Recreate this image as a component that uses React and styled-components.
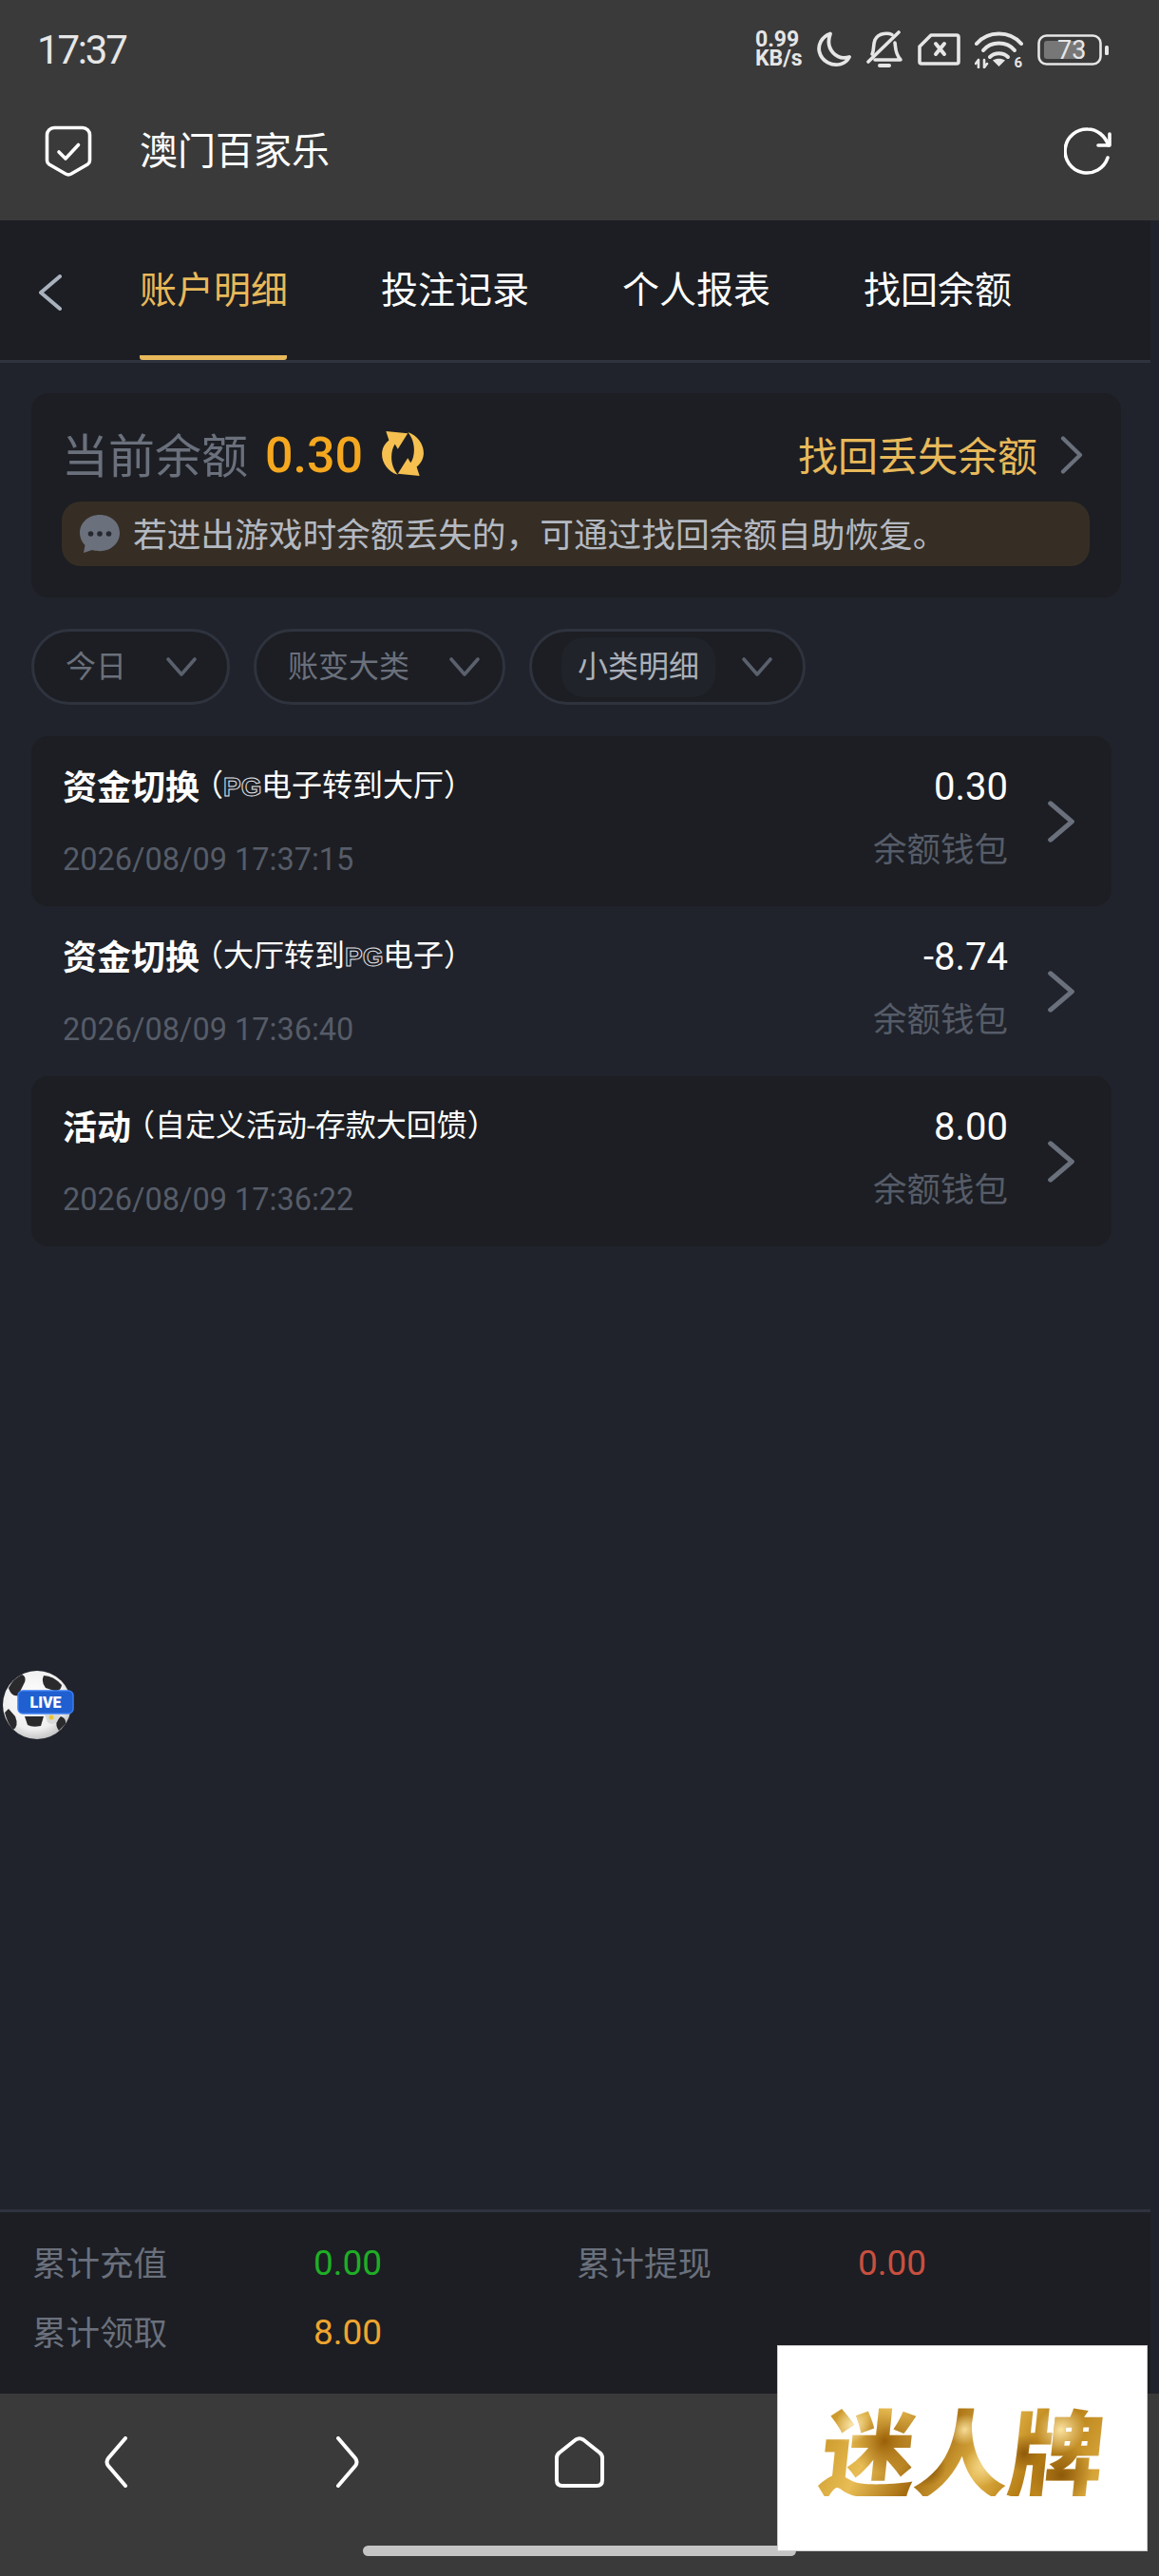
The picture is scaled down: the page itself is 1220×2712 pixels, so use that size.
import styled, { createGlobalStyle } from "styled-components";

const FONT = `Roboto, "Noto Sans CJK SC", sans-serif`;

const GlobalStyle = createGlobalStyle`
	html, body {
		margin: 0;
		padding: 0;
		background: #20232b;
	}
	body {
		font-family: ${FONT};
	}
`;

const Page = styled.div`
	width: 1220px;
	height: 2712px;
	position: relative;
	display: flex;
	flex-direction: column;
	overflow: hidden;
	background: #20232b;
`;

const TopArea = styled.div`
	background: #3a3a3a;
	color: #fff;
`;

const StatusBar = styled.div`
	height: 104px;
	padding: 0 52px 0 39px;
	display: flex;
	align-items: center;
	justify-content: space-between;
	color: #e6e6e6;
`;

const Clock = styled.span`
	font-size: 42px;
	font-weight: 400;
	letter-spacing: -2.2px;
`;

const StatusIcons = styled.div`
	display: flex;
	align-items: center;
	gap: 15px;
`;

const Speed = styled.div`
	width: 52px;
	margin-right: -2px;
	font-size: 23px;
	line-height: 20px;
	font-weight: 700;
	white-space: nowrap;
	span {
		display: block;
	}
`;

const HeaderRow = styled.div`
	height: 110px;
	padding: 0 48px 18px 47px;
	display: flex;
	align-items: center;
	gap: 50px;
`;

const HeaderTitle = styled.div`
	flex: 1;
	margin-top: 2px;
	font-size: 40px;
	line-height: 48px;
`;

const Content = styled.div`
	width: 1211px;
	flex: 1;
	display: flex;
	flex-direction: column;
`;

const TabBar = styled.div`
	height: 147px;
	display: flex;
	background: #1c1e23;
	border-bottom: 3px solid #2e333e;
`;

const BackSlot = styled.div`
	width: 147px;
	padding: 4px 0 0 41px;
	box-sizing: border-box;
	display: flex;
	align-items: center;
`;

const Tabs = styled.div`
	display: flex;
	gap: 99px;
`;

const Tab = styled.div`
	width: 155px;
	height: 147px;
	box-sizing: border-box;
	padding-bottom: 3px;
	display: flex;
	align-items: center;
	white-space: nowrap;
	font-size: 39px;
	color: ${({ $active }) => ($active ? "#e8b95a" : "#fff")};
	border-bottom: 5px solid ${({ $active }) => ($active ? "#e8b95a" : "transparent")};
	border-radius: 0 0 3px 3px;
`;

const Body = styled.div`
	flex: 1;
	padding: 32px 41px 0 33px;
`;

const BalanceCard = styled.div`
	height: 215px;
	box-sizing: border-box;
	padding: 40px 33px 0 32px;
	margin-right: -10px;
	border-radius: 18px;
	background: #1c1e23;
`;

const BalanceHead = styled.div`
	height: 50px;
	display: flex;
	align-items: center;
`;

const BalanceLabel = styled.span`
	font-size: 49px;
	color: #6a707c;
	margin-top: -6px;
`;

const BalanceValue = styled.span`
	margin-left: 18px;
	font-size: 52px;
	font-weight: 500;
	color: #f5a81f;
`;

const RefreshWrap = styled.span`
	display: flex;
	margin-left: 18px;
	margin-top: -2px;
`;

const RecoverLink = styled.div`
	margin-left: auto;
	display: flex;
	align-items: center;
	gap: 24px;
	padding-right: 7px;
	font-size: 42px;
	color: #e8b95a;
	span {
		margin-top: -4px;
	}
`;

const Notice = styled.div`
	height: 68px;
	margin-top: 24px;
	padding-left: 19px;
	display: flex;
	align-items: center;
	gap: 14px;
	border-radius: 20px;
	background: #362e24;
	font-size: 35.7px;
	color: #b4b9c2;
	white-space: nowrap;
	span {
		margin-top: -4px;
	}
`;

const Filters = styled.div`
	margin-top: 33px;
	display: flex;
	gap: 25px;
`;

const FilterPill = styled.div`
	height: 80px;
	box-sizing: border-box;
	padding: 0 ${({ $tight }) => ($tight ? "24px" : "32px")} 0 33px;
	display: flex;
	align-items: center;
	gap: 42px;
	border: 3px solid #2e333e;
	border-radius: 40px;
	background: #1c1e23;
`;

const FilterLabel = styled.span`
	font-size: 32px;
	line-height: 63px;
	white-space: nowrap;
	color: ${({ $active }) => ($active ? "#aab0ba" : "#6a707c")};
	${({ $active }) =>
		$active &&
		`
		margin: 0 -14px 0 -2px;
		padding: 0 17px;
		border-radius: 24px;
		background: #20232a;
	`}
`;

const RecordList = styled.div`
	margin-top: 33px;
`;

const RecordRow = styled.div`
	height: 179px;
	box-sizing: border-box;
	padding: 32px 38px 0 33px;
	display: flex;
	border-radius: 18px;
	background: ${({ $filled }) => ($filled ? "#1c1e23" : "transparent")};
`;

const RecordMain = styled.div`
	flex: 1;
`;

const RecordTitle = styled.div`
	height: 40px;
	display: flex;
	align-items: center;
	white-space: nowrap;
	color: #fff;
	strong {
		margin-top: -3px;
		font-size: 36px;
		font-weight: 700;
	}
	span {
		margin: -6px 0 0 -7px;
		font-size: 32px;
	}
`;

const PgMark = styled.b`
	display: inline-block;
	width: 40px;
	margin-top: 4px;
	font-family: "Liberation Sans", sans-serif;
	font-size: 28px;
	line-height: 32px;
	font-weight: 700;
	color: #1c1e23;
	-webkit-text-stroke: 1px #e4e4ea;
`;

const RecordDate = styled.div`
	margin-top: 38px;
	font-size: 32.5px;
	line-height: 40px;
	color: #565c68;
`;

const RecordSide = styled.div`
	margin-top: -2px;
	text-align: right;
`;

const RecordAmount = styled.div`
	font-size: 40px;
	line-height: 48px;
	color: #fff;
`;

const RecordWallet = styled.div`
	margin-top: 20px;
	font-size: 35.500px;
	line-height: 44px;
	color: #565c68;
`;

const RecordChevron = styled.div`
	width: 30px;
	margin: 36px 0 0 41px;
`;

const Summary = styled.div`
	height: 194px;
	box-sizing: border-box;
	padding: 29px 0 0 34px;
	display: grid;
	grid-template-columns: 296px 277px 296px 1fr;
	grid-auto-rows: 50px;
	row-gap: 23px;
	align-items: center;
	background: #1c1e23;
	border-top: 3px solid #2e333e;
`;

const SummaryLabel = styled.span`
	margin-top: -5px;
	font-size: 35.500px;
	color: #6a707c;
`;

const SummaryValue = styled.span`
	margin-top: -2px;
	font-size: 37px;
	color: ${({ $color }) => $color};
`;

const BottomNav = styled.div`
	height: 192px;
	background: #3a3a3a;
	display: flex;
	flex-direction: column;
	align-items: center;
`;

const NavButtons = styled.div`
	width: 100%;
	height: 144px;
	display: grid;
	grid-template-columns: repeat(5, 1fr);
	align-items: center;
	justify-items: center;
`;

const HomeIndicator = styled.div`
	width: 456px;
	height: 11px;
	margin-top: 16px;
	border-radius: 6px;
	background: #c4c4c4;
`;

const LiveBall = styled.div`
	position: absolute;
	left: 2px;
	top: 1757px;
	display: flex;
`;

const Watermark = styled.div`
	position: absolute;
	right: 12px;
	bottom: 26px;
	width: 390px;
	height: 217px;
	box-sizing: border-box;
	display: flex;
	align-items: center;
	justify-content: center;
	background: #fff;
	border: 1px solid #cfcfcf;
`;

const WatermarkText = styled.div`
	font-family: "Noto Sans CJK SC", sans-serif;
	font-size: 100px;
	font-weight: 900;
	line-height: 1;
	letter-spacing: -1px;
	transform: skewX(-6deg);
	color: transparent;
	background:
		radial-gradient(circle at 10% 25%, #fbe7ae 0, transparent 7%),
		radial-gradient(circle at 22% 42%, #9a5f06 0, transparent 14%),
		radial-gradient(circle at 38% 70%, #7f4d06 0, transparent 10%),
		radial-gradient(circle at 50% 30%, #f6dc96 0, transparent 10%),
		radial-gradient(circle at 58% 68%, #f3d68a 0, transparent 12%),
		radial-gradient(circle at 72% 55%, #8f5a0a 0, transparent 9%),
		radial-gradient(circle at 84% 30%, #fbe3a0 0, transparent 10%),
		radial-gradient(circle at 86% 78%, #8f5a0a 0, transparent 12%),
		linear-gradient(115deg, #c48f1e, #e8bd55 22%, #a56d10 40%, #e3b548 58%, #b57c14 75%, #dfb044);
	-webkit-background-clip: text;
	background-clip: text;
`;

const ShieldIcon = () => (
	<svg width="50" height="54" viewBox="0 0 50 54" fill="none" stroke="#fff" strokeWidth="3.6" strokeLinecap="round" strokeLinejoin="round">
		<path d="M10 2.5H40a7.5 7.5 0 0 1 7.5 7.5V37a5 5 0 0 1-2.2 4L28 51a6 6 0 0 1-6 0L4.7 41a5 5 0 0 1-2.2-4V10A7.5 7.5 0 0 1 10 2.5Z" />
		<path d="M15 28l7 7 13.5-14.5" />
	</svg>
);

const ReloadIcon = () => (
	<svg width="52" height="52" viewBox="0 0 52 52" fill="none" stroke="#fff" strokeWidth="3.6" strokeLinecap="round" strokeLinejoin="round">
		<path d="M47 20C43 10 35 3 25 3A23 23 0 1 0 46 33" />
		<path d="M48 8V20H36" />
	</svg>
);

const MoonIcon = () => (
	<svg width="36" height="38" viewBox="0 0 36 38" fill="none" stroke="#e6e6e6" strokeWidth="3.8" strokeLinejoin="round">
		<path d="M14 2.5C4 6 1 15 2.500 21.500C5 32 16 37 25 34.500C29 33.500 32 31 34 27C21 31 8 19 14 2.500Z" />
	</svg>
);

const BellOffIcon = () => (
	<svg width="40" height="40" viewBox="0 0 40 40" fill="none" stroke="#e6e6e6" strokeWidth="3.6" strokeLinecap="round" strokeLinejoin="round">
		<path d="M28 4.5C25 3 14 1.5 10 10C8 15 9 22 7 25" />
		<path d="M31 13C32 19 31 24 37 31H10" />
		<path d="M3 33L35 2" />
		<path d="M15 37H25" strokeWidth="4" />
	</svg>
);

const SimOffIcon = () => (
	<svg width="45" height="34" viewBox="0 0 45 34" fill="none" stroke="#e6e6e6" strokeWidth="3.6" strokeLinecap="round" strokeLinejoin="round">
		<path d="M14 2H41a2 2 0 0 1 2 2V30a2 2 0 0 1-2 2H4a2 2 0 0 1-2-2V14Z" />
		<path d="M19 11l9 11M28 11l-9 11" strokeWidth="4" />
	</svg>
);

const WifiIcon = () => (
	<svg width="51" height="39" viewBox="0 0 51 39" fill="none" stroke="#e6e6e6" strokeWidth="4" strokeLinecap="round">
		<path d="M2 13C14 -1 37 -1 49 13" />
		<path d="M9 20C17 10 34 10 42 20" />
		<path d="M16 27C21 22 30 22 35 27" />
		<path d="M25.5 37L19 30.5C23 28 28 28 32 30.5Z" fill="#e6e6e6" strokeWidth="0" />
		<path d="M4 30V38M1 34L4 30M10 30V38M13 34L10 38" strokeWidth="2.6" />
		<text x="41.500" y="38" fontFamily="Roboto, sans-serif" fontSize="15" fontWeight="700" fill="#e6e6e6" stroke="none">6</text>
	</svg>
);

const BatteryIcon = () => (
	<svg width="76" height="33" viewBox="0 0 76 33" fill="none">
		<rect x="1.5" y="1.5" width="65" height="30" rx="8" stroke="#e6e6e6" strokeWidth="2.6" />
		<rect x="7" y="7" width="41" height="19" rx="3" fill="#777" />
		<rect x="71" y="12" width="4" height="10" rx="1.5" fill="#e6e6e6" />
		<text x="21" y="26" fontFamily="Roboto, sans-serif" fontSize="27" fill="#e6e6e6">73</text>
	</svg>
);

const BackIcon = () => (
	<svg width="24" height="38" viewBox="0 0 24 38" fill="none" stroke="#a9b1bd" strokeWidth="4" strokeLinecap="round" strokeLinejoin="round">
		<path d="M22 2L2 19l20 17" />
	</svg>
);

const CoinRefreshIcon = () => (
	<svg width="48" height="52" viewBox="0 0 46 50">
		<g fill="#f5c050">
			<path d="M18 46C2 41-4 21 9 11L6 2L28 4L18 20L15 15C10 23 10 37 18 46Z" />
			<path d="M18 46C2 41-4 21 9 11L6 2L28 4L18 20L15 15C10 23 10 37 18 46Z" transform="rotate(180 23 24.5)" />
		</g>
	</svg>
);

const ChevronRight = ({ width = 24, height = 40, color = "#6a707c" }) => (
	<svg width={width} height={height} viewBox="0 0 24 40" fill="none" stroke={color} strokeWidth="4.2" strokeLinecap="round" strokeLinejoin="round" preserveAspectRatio="none">
		<path d="M3 2.5L21 20 3 37.5" />
	</svg>
);

const ChatIcon = () => (
	<svg width="42" height="40" viewBox="0 0 42 40">
		<path d="M21 0C9 0 0 8.500 0 19c0 5 2 9.500 5.500 13L4 40l9-3c2.500 .8 5 1.200 8 1.200 12 0 21-8.500 21-19.200S33 0 21 0Z" fill="#6a707c" />
		<circle cx="11.500" cy="20" r="2.800" fill="#262830" />
		<circle cx="21" cy="20" r="2.800" fill="#262830" />
		<circle cx="30.500" cy="20" r="2.800" fill="#262830" />
	</svg>
);

const ChevronDown = () => (
	<svg width="32" height="20" viewBox="0 0 32 20" fill="none" stroke="#5a606c" strokeWidth="3.600" strokeLinecap="round" strokeLinejoin="round">
		<path d="M2 2l14 16L30 2" />
	</svg>
);

const NavBackIcon = ({ flip }) => (
	<svg width="24" height="54" viewBox="0 0 24 54" fill="none" stroke="#fff" strokeWidth="4" strokeLinecap="round" style={flip ? { transform: "scaleX(-1)" } : undefined}>
		<path d="M22 2L4 23Q1 27 4 31L22 52" />
	</svg>
);

const HomeIcon = () => (
	<svg width="52" height="54" viewBox="0 0 52 54" fill="none" stroke="#fff" strokeWidth="4" strokeLinejoin="round">
		<path d="M22 3.500Q26 1 30 3.500L47 17Q50 19 50 23V46Q50 52 44 52H8Q2 52 2 46V23Q2 19 5 17Z" />
	</svg>
);

const BallIcon = () => (
	<svg width="78" height="78" viewBox="0 0 78 78">
		<defs>
			<radialGradient id="ballShade" cx="45%" cy="40%" r="65%">
				<stop offset="0" stopColor="#ffffff" />
				<stop offset="0.7" stopColor="#efefef" />
				<stop offset="1" stopColor="#b9b9bb" />
			</radialGradient>
		</defs>
		<circle cx="37" cy="38" r="36" fill="url(#ballShade)" />
		<path d="M7 20Q12 10 21 6Q26 8 24 14L17 28Q10 30 7 20Z" fill="#2a2a2c" />
		<path d="M44 7Q54 7 63 17Q62 24 55 23L46 20Q41 14 44 7Z" fill="#2a2a2c" />
		<path d="M24 50H44L41 60Q32 62 27 59Z" fill="#2a2a2c" />
		<path d="M3 46Q6 58 12 64Q18 60 14 50L7 42Z" fill="#2a2a2c" />
		<path d="M62 50Q68 52 67 58L60 65Q56 60 58 54Z" fill="#2a2a2c" />
		<rect x="17" y="23" width="58" height="24" rx="5" fill="#1f5fd0" stroke="#3b7df0" strokeWidth="1.500" />
		<text x="46" y="41" textAnchor="middle" fontFamily="Roboto, sans-serif" fontSize="16" fontWeight="900" fill="#fff">LIVE</text>
		<path d="M45 48H62L58 56Q52 60 48 56Z" fill="#d9d9d9" />
		<circle cx="52" cy="51" r="2.500" fill="#e8c53a" />
	</svg>
);

const records = [
	{
		id: 1,
		title: "资金切换",
		detail: (
			<span>
				（<PgMark>PG</PgMark>电子转到大厅）
			</span>
		),
		time: "2026/08/09 17:37:15",
		amount: "0.30",
		filled: true,
	},
	{
		id: 2,
		title: "资金切换",
		detail: (
			<span>
				（大厅转到<PgMark>PG</PgMark>电子）
			</span>
		),
		time: "2026/08/09 17:36:40",
		amount: "-8.74",
		filled: false,
	},
	{
		id: 3,
		title: "活动",
		detail: <span>（自定义活动-存款大回馈）</span>,
		time: "2026/08/09 17:36:22",
		amount: "8.00",
		filled: true,
	},
];

const App = () => {
	return (
		<Page>
			<GlobalStyle />
			<TopArea>
				<StatusBar>
					<Clock>17:37</Clock>
					<StatusIcons>
						<Speed>
							<span>0.99</span>
							<span>KB/s</span>
						</Speed>
						<MoonIcon />
						<BellOffIcon />
						<SimOffIcon />
						<WifiIcon />
						<BatteryIcon />
					</StatusIcons>
				</StatusBar>
				<HeaderRow>
					<ShieldIcon />
					<HeaderTitle>澳门百家乐</HeaderTitle>
					<ReloadIcon />
				</HeaderRow>
			</TopArea>

			<Content>
				<TabBar>
					<BackSlot>
						<BackIcon />
					</BackSlot>
					<Tabs>
						<Tab $active>账户明细</Tab>
						<Tab>投注记录</Tab>
						<Tab>个人报表</Tab>
						<Tab>找回余额</Tab>
					</Tabs>
				</TabBar>

				<Body>
					<BalanceCard>
						<BalanceHead>
							<BalanceLabel>当前余额</BalanceLabel>
							<BalanceValue>0.30</BalanceValue>
							<RefreshWrap>
								<CoinRefreshIcon />
							</RefreshWrap>
							<RecoverLink>
								<span>找回丢失余额</span>
								<ChevronRight />
							</RecoverLink>
						</BalanceHead>
						<Notice>
							<ChatIcon />
							<span>若进出游戏时余额丢失的，可通过找回余额自助恢复。</span>
						</Notice>
					</BalanceCard>

					<Filters>
						<FilterPill>
							<FilterLabel>今日</FilterLabel>
							<ChevronDown />
						</FilterPill>
						<FilterPill $tight>
							<FilterLabel>账变大类</FilterLabel>
							<ChevronDown />
						</FilterPill>
						<FilterPill>
							<FilterLabel $active>小类明细</FilterLabel>
							<ChevronDown />
						</FilterPill>
					</Filters>

					<RecordList>
						{records.map((record) => (
							<RecordRow key={record.id} $filled={record.filled}>
								<RecordMain>
									<RecordTitle>
										<strong>{record.title}</strong>
										{record.detail}
									</RecordTitle>
									<RecordDate>{record.time}</RecordDate>
								</RecordMain>
								<RecordSide>
									<RecordAmount>{record.amount}</RecordAmount>
									<RecordWallet>余额钱包</RecordWallet>
								</RecordSide>
								<RecordChevron>
									<ChevronRight width={30} height={44} />
								</RecordChevron>
							</RecordRow>
						))}
					</RecordList>
				</Body>

				<Summary>
					<SummaryLabel>累计充值</SummaryLabel>
					<SummaryValue $color="#1fae26">0.00</SummaryValue>
					<SummaryLabel>累计提现</SummaryLabel>
					<SummaryValue $color="#c9503f">0.00</SummaryValue>
					<SummaryLabel>累计领取</SummaryLabel>
					<SummaryValue $color="#efa52f">8.00</SummaryValue>
				</Summary>
			</Content>

			<BottomNav>
				<NavButtons>
					<NavBackIcon />
					<NavBackIcon flip />
					<HomeIcon />
				</NavButtons>
				<HomeIndicator />
			</BottomNav>

			<LiveBall>
				<BallIcon />
			</LiveBall>
			<Watermark>
				<WatermarkText>迷人牌</WatermarkText>
			</Watermark>
		</Page>
	);
};

export default App;
